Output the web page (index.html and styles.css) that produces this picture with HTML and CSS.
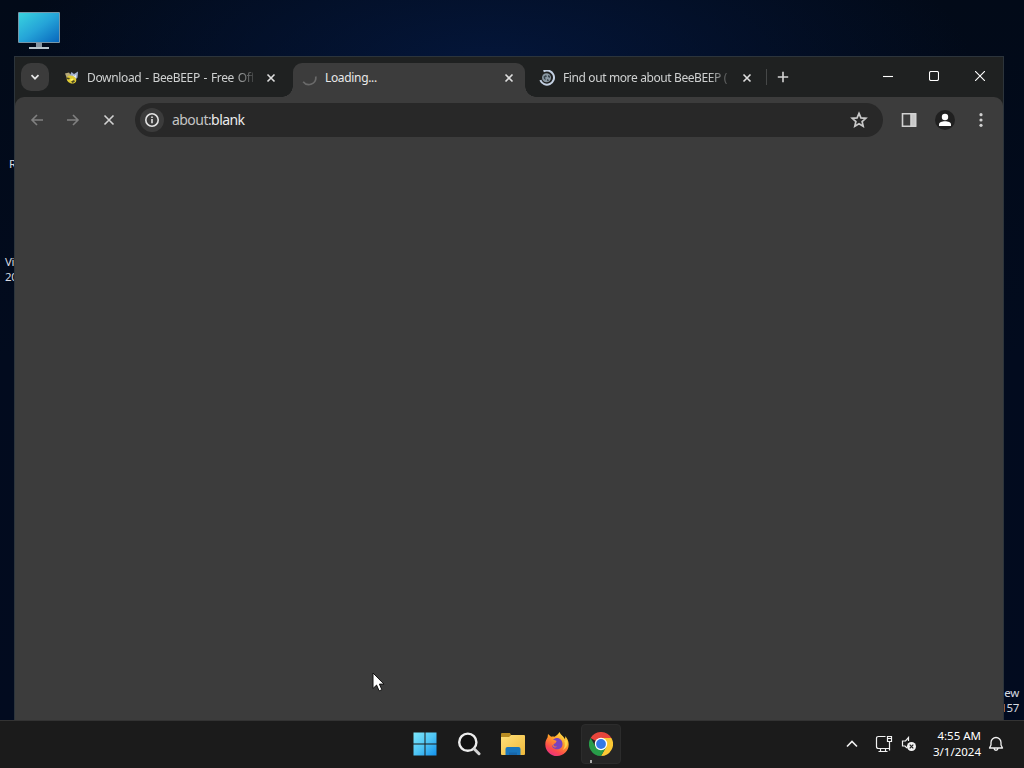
FILE: index.html
```
<!DOCTYPE html>
<html lang="en">
<head>
  <meta charset="UTF-8" />
  <title>about:blank</title>
  <link rel="stylesheet" href="styles.css">
</head>
<body>
  <div class="desktop">
    <!-- Desktop icons -->
    <svg class="pc-icon" width="44" height="40" viewBox="0 0 44 40">
      <defs>
        <linearGradient id="screen" x1="0" y1="0" x2="1" y2="1">
          <stop offset="0" stop-color="#39d3df" />
          <stop offset="0.5" stop-color="#25a4d8" />
          <stop offset="1" stop-color="#0867bd" />
        </linearGradient>
      </defs>
      <rect x="1" y="1" width="42" height="31" rx="1" fill="#7796a8" />
      <rect x="2" y="2" width="40" height="29" fill="url(#screen)" />
      <path d="M19 32h6v5h-6z" fill="#8795a1" />
      <path d="M12 36h20v2H12z" fill="#b8c5cd" />
    </svg>
    <div class="icon-label label-r">R</div>
    <div class="icon-label label-vi">Vi<br>20</div>
    <div class="icon-label label-build">ew<br>157</div>

    <!-- Browser window -->
    <div class="window">
      <div class="tab-strip">
        <button class="tab-search">
          <svg width="12" height="12" viewBox="0 0 12 12"><path d="M2.5 4.2 6 7.7l3.500-3.500" fill="none" stroke="#e6e6e6" stroke-width="1.7" /></svg>
        </button>
        <div class="tab">
          <svg class="favicon" width="16" height="16" viewBox="0 0 16 16">
            <path d="M2 3.500l4-1 2 3-4 3z" fill="#b8ab7a" />
            <path d="M7 5l1.500-3 2.500 2 4-2.500-.500 6-3 3-4-2z" fill="#a3b1cf" />
            <path d="M10 5l1.500 1L13 4.500v3l-2 1z" fill="#e6ecf4" />
            <ellipse cx="8.500" cy="9.500" rx="5" ry="3.800" transform="rotate(25 8.500 9.500)" fill="#dfcb35" />
            <path d="M4 7.500l3 .5-1 1.500-2-.5zM8 11.500l3-1.500 1 1.500-2.500 1.500z" fill="#4e4922" />
            <path d="M7 9.500l2.500-1 1 1-2.500 1.500z" fill="#fff36a" />
          </svg>
          <span class="tab-title fade">Download - BeeBEEP - Free Offi</span>
          <button class="tab-close"><svg width="10" height="10" viewBox="0 0 10 10"><path d="M1.500 1.500l7 7m0-7l-7 7" /></svg></button>
        </div>
        <div class="tab active">
          <svg class="favicon" width="16" height="16" viewBox="0 0 16 16"><path d="M14.700 6.500A7 7 0 0 1 2.200 11.800" fill="none" stroke="#6a6a6a" stroke-width="1.700" /></svg>
          <span class="tab-title">Loading...</span>
          <button class="tab-close"><svg width="10" height="10" viewBox="0 0 10 10"><path d="M1.500 1.500l7 7m0-7l-7 7" /></svg></button>
        </div>
        <div class="tab">
          <svg class="favicon" width="16" height="16" viewBox="0 0 16 16">
            <path d="M4.500 1.300A7.100 7.100 0 1 1 1.300 10.200" fill="none" stroke="#c3d0e2" stroke-width="2" />
            <circle cx="7.500" cy="7.800" r="4.500" fill="#8997a2" />
            <path d="M4.500 6.500l2.500-1.500 1 1.500-2 1 1 2.500-2-1zM9 5l2 1v2l-2-1zM8 9l2 1-1 1.500-1-1z" fill="#39454d" />
          </svg>
          <span class="tab-title tight fade">Find out more about BeeBEEP (</span>
          <button class="tab-close"><svg width="10" height="10" viewBox="0 0 10 10"><path d="M1.500 1.500l7 7m0-7l-7 7" /></svg></button>
        </div>
        <div class="tab-divider"></div>
        <button class="new-tab"><svg width="12" height="12" viewBox="0 0 12 12"><path d="M6 .8v10.400M.8 6h10.400" stroke="#d4d4d4" stroke-width="1.600" /></svg></button>

        <div class="window-controls">
          <button><svg width="10" height="10" viewBox="0 0 10 10"><path d="M0 5.500h10" /></svg></button>
          <button><svg width="10" height="10" viewBox="0 0 10 10"><rect x=".5" y=".5" width="9" height="9" rx="1.500" /></svg></button>
          <button><svg width="10" height="10" viewBox="0 0 10 10"><path d="M0 0l10 10m0-10l-10 10" /></svg></button>
        </div>
      </div>

      <div class="toolbar">
        <button class="tool dim"><svg width="16" height="16" viewBox="0 0 16 16"><path d="M14 8H3M8 3L3 8l5 5" /></svg></button>
        <button class="tool dim"><svg width="16" height="16" viewBox="0 0 16 16"><path d="M2 8h11M8 3l5 5-5 5" /></svg></button>
        <button class="tool"><svg width="16" height="16" viewBox="0 0 16 16"><path d="M3.500 3.500l9 9m0-9l-9 9" /></svg></button>
        <div class="address">
          <span class="site-info">
            <svg width="16" height="16" viewBox="0 0 16 16"><circle cx="8" cy="8" r="6.200" fill="none" stroke="#e3e3e3" stroke-width="1.600" /><path d="M8 7v4.300M8 4.500v1.600" stroke="#e3e3e3" stroke-width="1.600" /></svg>
          </span>
          <span class="url"><span class="scheme">about:</span>blank</span>
          <svg class="star" width="18" height="18" viewBox="0 0 18 18"><path d="M9 2.400l1.900 4.500 4.900.4-3.700 3.200 1.100 4.800L9 12.800l-4.200 2.500 1.100-4.800-3.700-3.200 4.900-.4z" fill="none" stroke="#c9c9c9" stroke-width="1.700" /></svg>
        </div>
        <button class="tool side-panel"><svg width="16" height="16" viewBox="0 0 16 16"><path d="M1.500 1.700h13v12.600h-13z" /><path d="M10 2h4.500v12H10z" fill="#c7c7c7" /></svg></button>
        <button class="tool">
          <span class="avatar"><svg width="14" height="14" viewBox="0 0 14 14"><circle cx="7" cy="4" r="3.200" /><path d="M1 13v-1.500C1 9.300 4 8.300 7 8.300s6 1 6 3.200V13z" /></svg></span>
        </button>
        <button class="tool dots"><svg width="16" height="16" viewBox="0 0 16 16"><circle cx="8" cy="2.700" r="1.600" /><circle cx="8" cy="8" r="1.600" /><circle cx="8" cy="13.300" r="1.600" /></svg></button>
      </div>
      <div class="page"></div>
    </div>

    <svg class="cursor" width="14" height="21" viewBox="0 0 14 21"><path d="M1 1v15.500l3.600-3.400 2.500 5.800 2.800-1.200-2.500-5.600H12z" fill="#fff" stroke="#111" stroke-width="1" /></svg>
  </div>

  <!-- Taskbar -->
  <div class="taskbar">
    <div class="apps">
      <div class="app">
        <svg width="24" height="24" viewBox="0 0 24 24">
          <defs>
            <linearGradient id="win" gradientUnits="userSpaceOnUse" x1="1" y1="1" x2="23" y2="23">
              <stop offset="0" stop-color="#7be6fb" />
              <stop offset="0.5" stop-color="#50c6f5" />
              <stop offset="1" stop-color="#1593ed" />
            </linearGradient>
          </defs>
          <path d="M.5.5h11v11H.5zM12.500.5h11v11h-11zM.5 12.500h11v11H.5zM12.500 12.500h11v11h-11z" fill="url(#win)" />
        </svg>
      </div>
      <div class="app">
        <svg width="24" height="24" viewBox="0 0 24 24"><circle cx="10.800" cy="10.200" r="8.600" fill="#111" stroke="#ededed" stroke-width="2.400" /><path d="M17 16.700l5 5" stroke="#d4d4d4" stroke-width="3" stroke-linecap="round" /></svg>
      </div>
      <div class="app">
        <svg width="26" height="26" viewBox="0 0 26 26">
          <defs>
            <linearGradient id="folder" x1="0" y1="0" x2="1" y2="1">
              <stop offset="0" stop-color="#ffe07a" />
              <stop offset="1" stop-color="#efb83a" />
            </linearGradient>
          </defs>
          <path d="M1 3q0-1 1-1h8l1 2-2 3H1z" fill="#b98c22" />
          <path d="M1 6h8l2-2h13q1 0 1 1v18q0 1-1 1H2q-1 0-1-1z" fill="url(#folder)" />
          <path d="M5.500 24v-6q0-2 2-2h11q2 0 2 2v6z" fill="#1976bd" />
          <path d="M9 24v-2.500h8V24z" fill="#1766aa" />
        </svg>
      </div>
      <div class="app">
        <svg width="26" height="26" viewBox="0 0 26 26">
          <defs>
            <linearGradient id="fox" x1="0.8" y1="0" x2="0.25" y2="1">
              <stop offset="0" stop-color="#ffe94d" />
              <stop offset="0.4" stop-color="#ff9d27" />
              <stop offset="0.75" stop-color="#fc4a4e" />
              <stop offset="1" stop-color="#e72f88" />
            </linearGradient>
          </defs>
          <path d="M15.500 1c1 3 4 4 5.300 7 .6-.8.600-2 .2-3 2.200 2 3.700 5 3.700 8.300a11.700 11.700 0 0 1-23.400.2c0-3.500 1.200-5.400 2.300-7.200L4 3l3.200 2.700c1-.3 2.300-.2 3.200.1 1.700-.7 3.600-2.300 5.100-4.800z" fill="url(#fox)" />
          <path d="M9 8.500c4-3.500 9.500-1 9.500 4.500 0 3.500-2.500 5.300-5.500 5.300-3.500 0-5.500-2.500-5-5.500l3.500-1.300 1.300-1.500z" fill="#7b43bd" />
          <path d="M7.500 11c1-.5 2.500-.2 4.500 0-.4 1.500-1.500 1.600-2.500 2.300-.3 2 1.500 2.700 3.500 2.100-2 2-5 1.200-5.500-4.400z" fill="#ff7b35" />
          <path d="M16 1.500c.3 4.500 5.500 6 4.800 12.500-.2 2-1 3.700-2.200 5 4-1.500 6-6 4.100-10.200-.8 1-1.500 1-2.200 1.200C20 6 16.500 5 16 1.500z" fill="#ffd84a" opacity=".9" />
        </svg>
      </div>
      <div class="app running">
        <svg width="24" height="24" viewBox="0 0 24 24">
          <path d="M12 12L1.600 6A12 12 0 0 1 22.400 6z" fill="#e8453c" />
          <path d="M12 6h10.400A12 12 0 0 1 12 24l5.200-9z" fill="#fbc834" />
          <path d="M1.600 6A12 12 0 0 0 12 24l5.200-9L12 12l-5.200 3z" fill="#289c49" />
          <circle cx="12" cy="12" r="6.200" fill="#fff" />
          <circle cx="12" cy="12" r="4.900" fill="#3478e5" />
        </svg>
        <span class="run-mark"></span>
      </div>
    </div>

    <div class="tray">
      <svg class="tray-up" width="12" height="12" viewBox="0 0 12 12"><path d="M1 8.500l5-5 5 5" stroke-width="1.600" /></svg>
      <svg class="tray-net" width="18" height="18" viewBox="0 0 18 18"><path d="M10.500 1.500h-7q-2 0-2 2v8q0 2 2 2h11V9M5.500 13.500v3m5-3v3M3.500 16.500h9M12.500 1.500h4v5h-4zM14.500 6.500v9M12.500 3.500h4" stroke-width="1.200" /></svg>
      <svg class="tray-sound" width="16" height="16" viewBox="0 0 16 16"><path d="M7.500 5V1.500L4.500 5h-3v5H4l2 2" stroke-width="1.200" /><circle cx="10.500" cy="10.500" r="4.500" fill="#f4f4f4" stroke="none" /><path d="M8.700 8.700l3.600 3.600m0-3.600l-3.600 3.600" class="mute" /></svg>
      <div class="clock">4:55 AM<br>3/1/2024</div>
      <svg class="tray-bell" width="16" height="16" viewBox="0 0 16 16"><path d="M3 9V6.500a5 5 0 0 1 10 0V9l1.500 3h-13zM6 12.500c.3 2.300 3.700 2.300 4 0" stroke-width="1.300" stroke-linejoin="round" /></svg>
    </div>
  </div>
</body>
</html>
```
FILE: styles.css
```
* {
  box-sizing: border-box;
}

body {
  margin: 0;
  width: 1024px;
  height: 768px;
  overflow: hidden;
  display: flex;
  flex-direction: column;
  background-color: #020917;
  font-family: "Noto Sans", "Open Sans", sans-serif;
  color: #fff;
  user-select: none;
}

button {
  padding: 0;
  border: none;
  background: transparent;
  font-family: inherit;
}

svg {
  display: block;
  flex: none;
}

.desktop {
  position: relative;
  height: 720px;
  overflow: hidden;
  background:
    radial-gradient(ellipse 480px 180px at 490px 65px, #04163a 0%, rgba(4, 22, 58, 0) 100%),
    linear-gradient(#020a18 0%, #020b1e 50%, #020b1f 100%);
}

/* Desktop icons */
.pc-icon {
  position: absolute;
  left: 17px;
  top: 11px;
}

.icon-label {
  position: absolute;
  font-size: 11.5px;
  line-height: 15px;
  letter-spacing: -0.3px;
  color: #d6dae1;
}

.label-r {
  left: 9px;
  top: 156px;
}

.label-vi {
  left: 5px;
  top: 254px;
}

.label-build {
  right: 5px;
  top: 685px;
  text-align: right;
}

/* Browser window */
.window {
  position: absolute;
  left: 14px;
  top: 56px;
  width: 990px;
  height: 664px;
  display: flex;
  flex-direction: column;
  border: 1px solid #2c343b;
  border-bottom: none;
  background-color: #1f2121;
}

.tab-strip {
  display: flex;
  align-items: flex-start;
  height: 40px;
  padding: 6px 0 0 6px;
}

.tab-search {
  display: flex;
  align-items: center;
  justify-content: center;
  width: 28px;
  height: 28px;
  margin-right: 6px;
  border-radius: 10px;
  background-color: #3b3b3b;
}

.tab {
  position: relative;
  display: flex;
  align-items: center;
  width: 232px;
  height: 34px;
  margin-right: 6px;
  padding: 0 11px 5px 8px;
}

.tab.active {
  border-radius: 9px 9px 0 0;
  background-color: #3c3c3c;
}

/* curved feet of the active tab */
.tab.active::before,
.tab.active::after {
  content: "";
  position: absolute;
  bottom: 0;
  width: 11px;
  height: 11px;
}

.tab.active::before {
  left: -11px;
  background: radial-gradient(circle at 0 0, transparent 10.5px, #3c3c3c 11px);
}

.tab.active::after {
  right: -11px;
  background: radial-gradient(circle at 100% 0, transparent 10.5px, #3c3c3c 11px);
}

.tab-title {
  flex: 1;
  min-width: 0;
  margin: 0 13px 0 8px;
  overflow: hidden;
  font-size: 12px;
  line-height: 18px;
  letter-spacing: -0.34px;
  word-spacing: 1px;
  white-space: nowrap;
  color: #cfd1d1;
}

.tab-title.tight {
  letter-spacing: -0.44px;
  word-spacing: 0.3px;
}

.active .tab-title {
  color: #e8e8e8;
}

.fade {
  -webkit-mask-image: linear-gradient(to right, #000 145px, transparent 172px);
  mask-image: linear-gradient(to right, #000 145px, transparent 172px);
}

.tab-close svg {
  fill: none;
  stroke: #dedede;
  stroke-width: 1.6;
}

.tab-divider {
  width: 1px;
  height: 16px;
  margin: 6px 10px 0 -3px;
  background-color: #464848;
}

.new-tab {
  height: 28px;
}

.window-controls {
  display: flex;
  margin: -6px 0 0 auto;
}

.window-controls button {
  display: flex;
  align-items: center;
  justify-content: center;
  width: 46px;
  height: 38px;
}

.window-controls svg {
  fill: none;
  stroke: #fff;
  stroke-width: 1.1;
}

/* Toolbar */
.toolbar {
  display: flex;
  align-items: center;
  height: 46px;
  padding: 0 4px;
  border-radius: 9px 9px 0 0;
  background-color: #3c3c3c;
}

.tool {
  display: flex;
  align-items: center;
  justify-content: center;
  width: 36px;
  height: 34px;
}

.tool svg {
  fill: none;
  stroke: #d2d2d2;
  stroke-width: 1.6;
}

.tool.dim svg {
  stroke: #808080;
}

.address {
  display: flex;
  align-items: center;
  width: 748px;
  height: 34px;
  margin: 0 8px;
  padding: 0 15px 0 5px;
  border-radius: 17px;
  background-color: #282828;
}

.site-info {
  display: flex;
  align-items: center;
  justify-content: center;
  width: 24px;
  height: 24px;
  border-radius: 50%;
  background-color: #3b3b3b;
}

.url {
  margin-left: 8px;
  font-size: 14px;
  line-height: 20px;
  letter-spacing: -0.55px;
  color: #ececec;
}

.scheme {
  color: #c4c4c4;
}

.star {
  margin-left: auto;
}

.avatar {
  display: flex;
  align-items: center;
  justify-content: center;
  width: 20px;
  height: 20px;
  border-radius: 50%;
  background-color: #202020;
}

.avatar svg {
  fill: #fff;
  stroke: none;
}

.dots svg {
  fill: #d0d0d0;
  stroke: none;
}

.page {
  flex: 1;
  background-color: #3c3c3c;
}

.cursor {
  position: absolute;
  left: 372px;
  top: 672px;
}

/* Taskbar */
.taskbar {
  display: flex;
  height: 48px;
  padding-bottom: 2px;
  border-top: 1px solid #333;
  background-color: #1b1b1b;
}

.apps {
  display: flex;
  align-items: center;
  gap: 4px;
  margin-left: 405px;
}

.app {
  position: relative;
  display: flex;
  align-items: center;
  justify-content: center;
  width: 40px;
  height: 40px;
}

.app.running {
  border: 1px solid #2c2c2c;
  border-radius: 4px;
  background-color: #252525;
}

.run-mark {
  position: absolute;
  left: 8px;
  bottom: 0;
  width: 2px;
  height: 3px;
  background-color: #aaa;
}

.tray {
  display: flex;
  align-items: center;
  margin-left: auto;
  padding-right: 20px;
}

.tray svg {
  fill: none;
  stroke: #f1f1f1;
}

.tray-net {
  margin-left: 17px;
}

.tray-sound {
  margin-left: 8px;
}

.tray .mute {
  stroke: #222;
  stroke-width: 1.2;
}

.clock {
  width: 64px;
  font-size: 11.5px;
  line-height: 16px;
  text-align: right;
}

.tray-bell {
  margin-left: 7px;
}
```
